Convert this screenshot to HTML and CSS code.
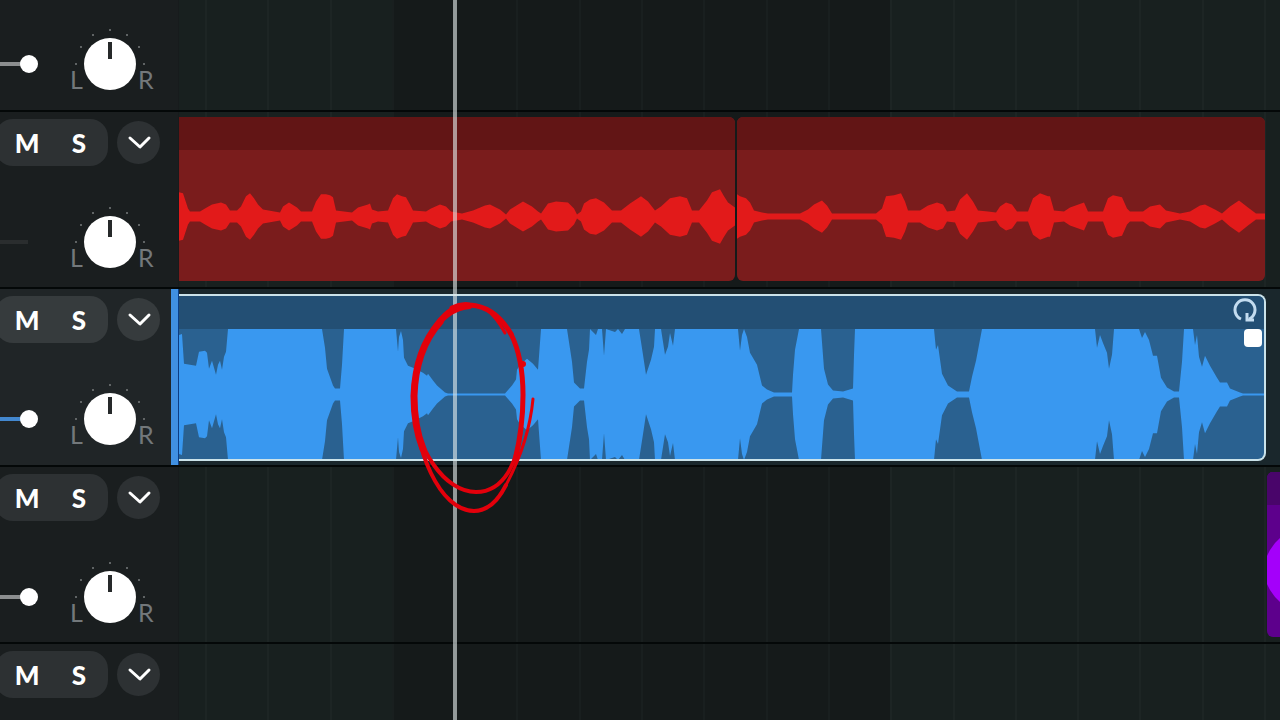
FILE: index.html
```html
<!DOCTYPE html>
<html lang="en">
<head>
    <meta charset="UTF-8">
    <meta name="viewport" content="width=device-width, initial-scale=1.0">
    <title>Track Editor</title>
    <link rel="stylesheet" href="styles.css">
</head>
<body>
    <div class="editor">
        <div class="beats" id="beats"></div>
        <div class="tracks" id="tracks"></div>
        <div class="playhead"></div>
        <svg class="marker" width="140" height="230" viewBox="400 290 140 230">
            <path class="thick" d="M440 322C424 340 415 365 414 396C414 416 417 434 423 449"/>
            <path class="thin" d="M505 333C499 322 494 315 486 309"/>
            <path class="wide" d="M452 308C458 305 464 304 470 305C486 306 500 315 511 334"/>
            <path class="wide" d="M511 334C519 350 523 370 523 395C523 420 520 440 515 460"/>
            <path d="M470 307C440 309 413 350 413 400C415 450 445 492 476 492C505 492 518 460 521 430"/>
            <path d="M468 305C440 304 419 345 414 390C413 450 440 511 474 511C490 511 500 497 506 485"/>
            <path class="thin" d="M506 485C521 457 530 430 533 399"/>
            <circle cx="523" cy="364" r="3"/>
        </svg>
    </div>
    <script src="script.js"></script>
</body>
</html>
```
FILE: styles.css
```css
* {
    box-sizing: border-box;
}
body {
    margin: 0;
    background-color: #181f1f;
    font-family: Lato, "Liberation Sans", sans-serif;
}
.editor {
    position: relative;
    height: 100vh;
    overflow: hidden;
}

/* beat grid behind the lanes */
.beats {
    position: absolute;
    top: 0;
    bottom: 0;
    left: 179px;
    right: 0;
    padding: 0 14px 0 26px;
    display: flex;
    background-color: #18201f;
}
.beat {
    flex: 1;
    border-left: 2px solid #1d2524;
}
.beat.dark {
    background-color: #151a1a;
    border-left-color: #191f1f;
}
.beat:last-child {
    border-right: 2px solid #1d2524;
}

.tracks {
    position: relative;
}
.track {
    display: flex;
    height: 177px;
    border-bottom: 2px solid #040808;
}
/* first track is scrolled, only its lower part is in view */
.track.first {
    height: 112px;
}
.track.selected {
    height: 178px;
}
.track-header {
    flex: none;
    width: 179px;
    padding-top: 7px;
    background-color: #1a1e1f;
    border-right: 1px solid #171b1c;
}
.track.selected {
    background-color: #1a272c;
}
.selected .track-header {
    background-color: #202527;
    border-right: 1px solid #0b3d86;
    box-shadow: inset -7px 0 #4090e2;
}
.buttons {
    display: flex;
    align-items: center;
    gap: 9px;
    margin-left: -5px;
}
.mute-solo {
    display: flex;
    width: 113px;
    height: 47px;
    padding: 0 3px 0 6px;
    border-radius: 18px;
    background-color: #2d3133;
}
button {
    border: none;
    padding: 0;
    background: none;
    color: #fff;
    cursor: pointer;
}
.mute-solo button {
    width: 52px;
    font-family: inherit;
    font-size: 26px;
    font-weight: 900;
    line-height: 44px;
}
.more {
    width: 43px;
    height: 43px;
    border-radius: 50%;
    background-color: #2d3133;
}
.more svg {
    display: block;
    margin: auto;
    fill: none;
    stroke: #fff;
    stroke-width: 3;
    stroke-linecap: round;
    stroke-linejoin: round;
}
.selected .mute-solo,
.selected .more {
    background-color: #363b3d;
}
.mix {
    display: flex;
    align-items: center;
    gap: 32px;
    margin-top: 50px;
}
.first .mix {
    margin-top: 31px;
}
input[type=range] {
    -webkit-appearance: none;
    appearance: none;
    display: block;
    margin: 0;
    background: transparent;
}
.fader {
    width: 38px;
    height: 18px;
}
.fader::-webkit-slider-runnable-track {
    height: 18px;
    background: linear-gradient(#8c8e8f, #8c8e8f) 0 50% / 28px 4px no-repeat;
}
.fader::-webkit-slider-thumb {
    -webkit-appearance: none;
    width: 18px;
    height: 18px;
    border-radius: 50%;
    background-color: #fff;
}
.selected .fader::-webkit-slider-runnable-track {
    background-image: linear-gradient(#4388cf, #4388cf);
}
.off .fader::-webkit-slider-runnable-track {
    background-image: linear-gradient(#2a2d2e, #2a2d2e);
}
.off .fader::-webkit-slider-thumb {
    background-color: transparent;
}
.pan {
    display: flex;
    align-items: flex-end;
    color: #73787b;
    font-size: 25px;
    line-height: 22px;
}
.pan span {
    width: 14px;
}
.pan span:last-child {
    margin-left: 2px;
}
.knob-box {
    position: relative;
}
.knob {
    width: 52px;
    height: 52px;
    border-radius: 50%;
    background: linear-gradient(#26292a, #26292a) 50% 4px / 4px 17px no-repeat #fff !important;
}
.knob::-webkit-slider-thumb {
    -webkit-appearance: none;
    width: 1px;
    height: 1px;
}
.ticks {
    position: absolute;
    left: -10px;
    top: -10px;
    fill: #777b7d;
    pointer-events: none;
}

/* clips */
.lane {
    flex: 1;
    min-width: 0;
    display: flex;
    gap: 2px;
    padding: 5px 15px 6px 0;
}
.clip {
    position: relative;
    min-width: 0;
    display: flex;
    flex-direction: column;
    border-radius: 6px;
    overflow: hidden;
}
.clip:first-child {
    border-top-left-radius: 0;
    border-bottom-left-radius: 0;
}
.clip-title {
    flex: none;
    height: 33px;
}
.wave {
    display: block;
    width: 100%;
    height: 100%;
    min-height: 0;
    flex: 1;
}
.red {
    background-color: #7a1c1c;
}
.red .clip-title {
    background-color: #621515;
}
.red .wave {
    fill: #e21a1a;
}
.selected .lane {
    padding: 5px 14px 4px 0;
}
.blue {
    background-color: #2a6190;
    border: 2px solid #cbe3ea;
    border-left: none;
    border-radius: 8px;
}
.blue .clip-title {
    background-color: #234f74;
}
.blue .wave {
    fill: #3998f0;
}
.purple {
    margin-left: auto;
    background-color: #5d008c;
    border-radius: 6px 0 0 6px !important;
}
.purple .clip-title {
    background-color: #49056a;
}
.purple .wave {
    fill: #a400fa;
}
.lane.to-edge {
    padding: 5px 0;
}
.loop {
    position: absolute;
    top: 2px;
    right: 6px;
    fill: none;
    stroke: #c3dcf0;
    stroke-width: 3;
}
.handle {
    position: absolute;
    top: 33px;
    right: 2px;
    width: 18px;
    height: 18px;
    border-radius: 4px;
    background-color: #fff;
}

.playhead {
    position: absolute;
    top: 0;
    bottom: 0;
    left: 453px;
    width: 4px;
    background-color: rgba(225, 232, 232, 0.62);
}
.marker {
    position: absolute;
    left: 400px;
    top: 290px;
    fill: none;
    stroke: #e3000b;
    stroke-width: 4;
    stroke-linecap: round;
    pointer-events: none;
}
.marker .thick {
    stroke-width: 7;
}
.marker .wide {
    stroke-width: 5;
}
.marker .thin {
    stroke-width: 3;
}
.marker circle {
    fill: #e3000b;
    stroke: none;
}
```
FILE: script.js
```javascript
// each wave is a list of "position:level" pairs
const tracks = [
    { state: 'first', clips: [] },
    {
        state: 'off',
        clips: [
            { color: 'red', start: 179, width: 556, height: 130, middle: 66,
              wave: '179:24 183:23 188:8 190:5 200:5 205:8 212:12 221:14 226:12 230:6 237:6 241:10 246:20 250:23 254:18 258:12 263:7 280:4 283:10 289:14 297:9 301:5 312:5 316:15 321:22 326:22 330:21 333:19 336:6 352:4 358:9 368:12 370:13 372:7 378:5 388:6 393:18 397:22 402:20 406:19 410:12 413:6 426:5 431:8 440:12 446:10 451:5 462:3 473:6 485:11 490:12 500:7 506:2 510:7 523:15 532:10 538:5 541:3 548:13 556:15 568:14 574:8 577:2 581:5 584:13 590:17 596:18 604:14 612:6 621:6 630:13 641:20 648:15 655:6 661:10 670:18 680:20 687:18 692:6 699:6 707:16 712:24 720:27 724:20 728:14 735:9' },
            { color: 'red', start: 737, width: 528, height: 130, middle: 66,
              wave: '737:22 740:20 746:18 750:14 754:6 762:4 768:3 800:3 808:7 814:12 822:16 827:11 832:3 876:3 882:8 886:20 894:21 901:23 905:15 908:6 920:6 928:11 937:14 943:12 947:5 955:6 960:17 967:23 973:15 978:6 988:5 996:4 1000:10 1006:14 1012:12 1017:5 1028:5 1033:18 1040:23 1048:20 1050:20 1054:6 1064:5 1070:9 1084:14 1088:5 1103:5 1108:18 1113:21 1122:19 1127:8 1130:5 1143:5 1150:10 1160:12 1166:6 1180:3 1190:5 1200:11 1205:12 1215:7 1222:3 1230:10 1239:16 1248:9 1256:3 1265:3' }
        ]
    },
    {
        state: 'selected',
        clips: [
            { color: 'blue', start: 179, width: 1085, height: 131, middle: 66, loop: true,
              wave: '179:60 182:61 184:31 196:29 199:43 205:44 207:42 209:26 212:34 214:27 216:20 218:30 220:34 222:25 224:38 226:43 228:66 322:66 325:47 327:26 333:9 335:6 340:6 342:30 344:66 396:66 398:43 399:58 401:64 403:55 404:37 408:29 413:27 423:22 427:19 428:21 433:14 437:9 445:2 448:1 505:1 512:9 516:15 517:25 520:30 527:36 533:31 538:25 541:66 567:66 572:33 574:12 580:6 584:6 587:33 589:45 590:66 596:60 598:66 602:66 604:39 606:66 615:63 618:66 622:61 625:66 639:66 643:40 646:20 651:35 654:48 655:66 661:66 665:40 668:48 670:62 673:49 675:66 738:66 740:44 742:60 744:66 747:58 750:42 757:30 762:9 767:5 774:2 792:2 793:20 795:45 799:66 821:66 824:26 828:10 833:4 843:3 853:6 854:40 855:66 934:66 936:45 938:50 942:21 948:9 957:3 969:3 972:18 976:34 982:66 1095:66 1097:47 1100:60 1103:52 1107:42 1109:26 1112:40 1114:66 1139:66 1142:57 1145:63 1149:55 1153:39 1157:39 1161:17 1167:7 1174:3 1179:3 1182:33 1184:66 1193:66 1195:50 1197:60 1199:38 1202:28 1205:39 1210:29 1217:17 1220:12 1227:12 1230:6 1240:2 1243:1 1264:1' }
        ]
    },
    {
        toEdge: true,
        clips: [
            { color: 'purple', start: 1267, width: 13, height: 132, middle: 65,
              wave: '1267:14 1270:20 1275:27 1280:32' }
        ]
    },
    { state: 'last', clips: [] }
];

function wavePoints(clip) {
    const levels = clip.wave.split(' ').map(p => p.split(':').map(Number));
    const top = levels.map(([x, v]) => `${x - clip.start},${clip.middle - v}`);
    const bottom = levels.map(([x, v]) => `${x - clip.start},${clip.middle + v}`).reverse();
    return top.concat(bottom).join(' ');
}

function clipHtml(clip) {
    return `
        <div class="clip ${clip.color}" style="flex: ${clip.color === 'purple' ? '0 0 ' + clip.width + 'px' : clip.width + ' 1 0'}">
            <div class="clip-title"></div>
            <svg class="wave" viewBox="0 0 ${clip.width} ${clip.height}" preserveAspectRatio="none">
                <polygon points="${wavePoints(clip)}"/>
            </svg>
            ${clip.loop ? `
                <svg class="loop" width="26" height="26" viewBox="0 0 26 26">
                    <path d="M9 21A10 10 0 1 1 17 21"/>
                    <path d="M15 15V22H22"/>
                </svg>
                <div class="handle"></div>` : ''}
        </div>`;
}

const buttonsHtml = `
    <div class="buttons">
        <div class="mute-solo">
            <button>M</button>
            <button>S</button>
        </div>
        <button class="more" aria-label="More">
            <svg width="26" height="16" viewBox="0 0 26 16"><path d="M4 3L14 12L23 3"/></svg>
        </button>
    </div>`;

function mixHtml(i) {
    return `
        <div class="mix">
            <input type="range" class="fader" aria-label="Volume ${i + 1}" value="100">
            <div class="pan">
                <span>L</span>
                <div class="knob-box">
                    <svg class="ticks" width="72" height="40" viewBox="-36 -36 72 40">
                        <circle cx="-34" cy="0" r="1"/>
                        <circle cx="-29" cy="-17" r="1"/>
                        <circle cx="-17" cy="-29" r="1"/>
                        <circle cx="0" cy="-34" r="1"/>
                        <circle cx="17" cy="-29" r="1"/>
                        <circle cx="29" cy="-17" r="1"/>
                        <circle cx="34" cy="0" r="1"/>
                    </svg>
                    <input type="range" class="knob" aria-label="Pan ${i + 1}" min="-50" max="50" value="0">
                </div>
                <span>R</span>
            </div>
        </div>`;
}

function trackHtml(track, i) {
    return `
        <div class="track ${track.state || ''}">
            <div class="track-header">
                ${track.state === 'first' ? '' : buttonsHtml}
                ${track.state === 'last' ? '' : mixHtml(i)}
            </div>
            <div class="lane ${track.toEdge ? 'to-edge' : ''}">${track.clips.map(clipHtml).join('')}</div>
        </div>`;
}

document.getElementById('tracks').innerHTML = tracks.map(trackHtml).join('');

// 17 beats in view, the middle bar is shaded
for (let i = 0; i < 17; i++) {
    const beat = document.createElement('div');
    beat.className = i >= 3 && i < 11 ? 'beat dark' : 'beat';
    document.getElementById('beats').appendChild(beat);
}
```
